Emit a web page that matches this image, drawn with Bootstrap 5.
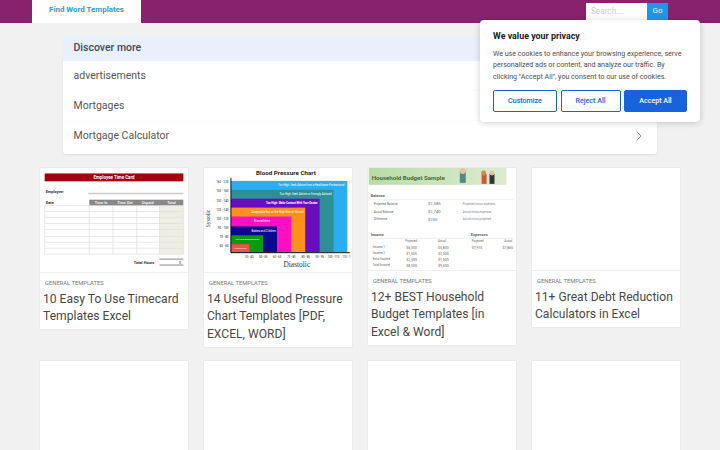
<!DOCTYPE html>
<html lang="en">
<head>
    <meta charset="UTF-8">
    <meta name="viewport" content="width=device-width, initial-scale=1.0">
    <title>Find Word Templates</title>
    <link href="https://cdn.jsdelivr.net/npm/bootstrap@5.3.0/dist/css/bootstrap.min.css" rel="stylesheet">
    <style>
        html, body { height: 450px; overflow: hidden; }
        body { background: #f1f1f1; font-family: Roboto, "Liberation Sans", sans-serif; color: #444; }
        .topbar { height: 23px; background: #88226f; padding-left: 32px; padding-right: 52px; }
        .brand-tab { width: 109px; height: 23px; background: #fff; color: #2f9bd9; font-size: 7.9px; font-weight: 700; text-decoration: none; padding-top: 4px; }
        .search-wrap { padding-top: 3px; }
        .search-box { width: 61px; height: 17px; background: #fff; color: #ccc; font-size: 8.2px; padding-left: 5px; line-height: 17px; }
        .go-btn { width: 21px; height: 17px; background: #2196e8; color: #e8f4ff; font-size: 8px; line-height: 16px; text-align: center; }
        .discover { width: 594px; margin: 13px 0 14px 63px; background: #fff; border-radius: 3px; box-shadow: 0 1px 2px rgba(0,0,0,.08); overflow: hidden; }
        .discover-head { height: 25px; background: #e8f0fb; color: #444a57; font-size: 10.5px; font-weight: 500; padding-left: 10.5px; line-height: 23px; }
        .discover-row { height: 30px; padding: 0 15px 0 10.5px; color: #555; font-size: 10.5px; border-bottom: 1px solid #fafafa; }
        .discover-row:last-child { border-bottom: 0; height: 33px; padding-bottom: 3px; }
        .tile-wrap { padding: 0 40px; }
        .tiles { --bs-gutter-y: 14px; }
        .tile { background: #fff; box-shadow: 0 0 1px rgba(0,0,0,.18); }
        .thumb { display: block; width: 148px; height: 105px; border-bottom: 1px solid #eee; }
        .thumb-short { height: 103px; }
        .tile-cat { font-size: 5.8px; color: #777; padding: 7px 0 0 5px; line-height: 7px; }
        .tile-title { font-size: 12.1px; line-height: 17.7px; color: #484848; padding: 3.5px 3px 3.5px; margin: 0; font-weight: 400; }
        .tile-empty { height: 120px; }
        .consent { position: absolute; left: 480px; top: 20px; width: 220px; height: 102px; background: #fff; border-radius: 4px; box-shadow: 0 1px 6px rgba(0,0,0,.2); padding: 10px 13px; }
        .consent-title { font-size: 8.9px; font-weight: 700; color: #212121; margin-bottom: 6px; line-height: 12px; }
        .consent-text { font-size: 7.1px; line-height: 11.3px; color: #4d4d4d; margin-bottom: 8px; }
        .consent-btn { height: 22px; font-size: 7.1px; font-weight: 500; padding: 0; border-radius: 2px; border: 1px solid #1863dc; color: #1863dc; background: #fff; }
        .consent-btn.solid { background: #1863dc; color: #fff; }
        .btn-customize { width: 64px; }
        .btn-reject { width: 60px; }
        .btn-accept { width: 63px; }
    </style>
</head>
<body>
    <nav class="topbar d-flex justify-content-between">
        <a class="brand-tab text-center" href="#">Find Word Templates</a>
        <div class="d-flex search-wrap">
            <div class="search-box">Search...</div>
            <div class="go-btn">Go</div>
        </div>
    </nav>

    <div class="discover">
        <div class="discover-head">Discover more</div>
        <div class="discover-row d-flex align-items-center">advertisements</div>
        <div class="discover-row d-flex align-items-center">Mortgages</div>
        <div class="discover-row d-flex align-items-center justify-content-between">
            Mortgage Calculator
            <svg width="6" height="10" viewBox="0 0 6 10"><path d="M1 .8 5 5 1 9.2" fill="none" stroke="#888" stroke-width="1"/></svg>
        </div>
    </div>

    <div class="tile-wrap">
    <div class="row gx-3 tiles align-items-start">
        <div class="col-3"><div class="tile">
            <svg class="thumb" viewBox="0 0 148 105">
                <rect width="148" height="105" fill="#fff"/>
                <rect x="4" y="5.500" width="140" height="8" fill="#a40010"/>
                <text x="74" y="11.500" font-size="4.500" font-weight="700" fill="#fff" text-anchor="middle" font-family="Roboto">Employee Time Card</text>
                <text x="5" y="25" font-size="4" font-weight="700" fill="#333" font-family="Roboto">Employee:</text>
                <rect x="48" y="25" width="96" height="1.500" fill="#ccc"/>
                <text x="5" y="36" font-size="4" font-weight="700" fill="#333" font-family="Roboto">Date</text>
                <rect x="49" y="32" width="95" height="6" fill="#888"/>
                <g font-size="3.800" fill="#eee" text-anchor="middle" font-family="Roboto" font-weight="700">
                    <text x="61" y="36.500">Time In</text><text x="85" y="36.500">Time Out</text><text x="108" y="36.500">Unpaid</text><text x="132" y="36.500">Total</text>
                </g>
                <rect x="120" y="38" width="24" height="49" fill="#eeeee2"/>
                <g stroke="#ddd" stroke-width=".7">
                    <path d="M4 38h140M4 44h140M4 50h140M4 56h140M4 62h140M4 69h140M4 75h140M4 81h140M4 87h140"/>
                    <path d="M49 38v49M73 38v49M97 38v49M120 38v49M144 38v49M4 38v49"/>
                </g>
                <text x="94" y="96.500" font-size="4" font-weight="700" fill="#333" font-family="Roboto">Total Hours</text>
                <path d="M120 92h24M120 98h24" stroke="#555" stroke-width=".7"/>
                <text x="142" y="97" font-size="4" fill="#333" text-anchor="end" font-family="Roboto">0</text>
            </svg>
            <div class="tile-cat">GENERAL TEMPLATES</div>
            <h5 class="tile-title">10 Easy To Use Timecard Templates Excel</h5>
        </div></div>
        <div class="col-3"><div class="tile">
            <svg class="thumb" viewBox="0 0 148 105">
                <rect width="148" height="105" fill="#fff"/>
                <text x="82" y="7.500" font-size="6.300" font-weight="700" fill="#222" text-anchor="middle" font-family="Roboto">Blood Pressure Chart</text>
                <rect x="26.500" y="13" width="117.500" height="72" fill="#29aef2"/>
                <rect x="26.500" y="22" width="103.500" height="63" fill="#2e8f97"/>
                <rect x="26.500" y="31" width="89.500" height="54" fill="#6a0dc0"/>
                <rect x="26.500" y="40" width="75" height="45" fill="#ff9020"/>
                <rect x="26.500" y="49" width="61" height="36" fill="#ff10c0"/>
                <rect x="26.500" y="59" width="46.500" height="26" fill="#0a0a90"/>
                <rect x="26.500" y="68" width="32.500" height="17" fill="#0a9a10"/>
                <rect x="26.500" y="77" width="18.500" height="8" fill="#f0504a"/>
                <g font-size="2.800" fill="#fff" text-anchor="end" font-family="Roboto">
                    <text x="141" y="18">Too High: Seek Advice from a Healthcare Professional</text>
                    <text x="128" y="27">Too High: Seek Advice or Strongly Advised</text>
                    <text x="114" y="36" font-weight="700">Too High: Make Contact With Your Doctor</text>
                    <text x="100" y="45">Acceptable But on the High Side of Normal</text>
                    <text x="72" y="64.500">Babies and Children</text>
                </g>
                <text x="58" y="54.500" font-size="4" fill="#fff" text-anchor="middle" font-family="Roboto">Excellent</text>
                <text x="43" y="73" font-size="2.300" fill="#fff" text-anchor="middle" font-family="Roboto">Not Low Blood Must Be</text>
                <text x="36" y="81.500" font-size="2.300" fill="#fff" text-anchor="middle" font-family="Roboto">Hypotension</text>
                <path d="M26.500 10v75.500h120" fill="none" stroke="#111" stroke-width="1"/>
                <g font-size="3" fill="#222" text-anchor="end" font-family="Roboto">
                    <text x="24" y="15.500">160 - 220</text><text x="24" y="24.500">150 - 160</text><text x="24" y="34">130 - 140</text><text x="24" y="43">120 - 140</text><text x="24" y="52">100 - 120</text><text x="24" y="61.500">90 - 100</text><text x="24" y="71">70 - 80</text><text x="24" y="80">60 - 65</text>
                </g>
                <g font-size="2.800" fill="#222" text-anchor="middle" font-family="Roboto">
                    <text x="45" y="91">30 - 40</text><text x="59" y="91">50 - 55</text><text x="73" y="91">60 - 65</text><text x="87.500" y="91">70 - 80</text><text x="102" y="91">80 - 85</text><text x="116" y="91">90 - 95</text><text x="130" y="91">100 - 110</text><text x="143" y="91">110 - 1</text>
                </g>
                <text x="93" y="100" font-size="7.500" fill="#333" text-anchor="middle" font-family="Liberation Serif">Diastolic</text>
                <text transform="translate(5 51) rotate(-90)" font-size="5.500" fill="#333" text-anchor="middle" font-family="Liberation Serif">Systolic</text>
            </svg>
            <div class="tile-cat">GENERAL TEMPLATES</div>
            <h5 class="tile-title">14 Useful Blood Pressure Chart Templates [PDF, EXCEL, WORD]</h5>
        </div></div>
        <div class="col-3"><div class="tile">
            <svg class="thumb thumb-short" viewBox="0 0 148 103">
                <defs><linearGradient id="bannerFade" x1="0" x2="1"><stop offset="0" stop-color="#b9dca6"/><stop offset="1" stop-color="#dcebd0"/></linearGradient></defs>
                <rect width="148" height="103" fill="#fff"/>
                <rect width="139" height="17" fill="url(#bannerFade)"/>
                <text x="3" y="12" font-size="6.200" font-weight="700" fill="#4a6a3a" font-family="Roboto">Household Budget Sample</text>
                <rect x="92" y="3" width="6" height="12" fill="#4d8a8a"/><circle cx="95" cy="3" r="3" fill="#e6c3a0"/>
                <rect x="114" y="6" width="5" height="10" fill="#c85a30"/><circle cx="116" cy="5" r="2.500" fill="#d28a50"/>
                <rect x="122" y="6" width="5" height="10" fill="#333"/><circle cx="124.500" cy="5" r="2.500" fill="#e6c3a0"/>
                <g fill="#666" font-family="Roboto">
                    <text x="2" y="29" font-size="4" font-weight="700">Balance</text>
                    <text x="5" y="37" font-size="3">Projected Balance</text><text x="5" y="45" font-size="3">Actual Balance</text><text x="5" y="53" font-size="3">Difference</text>
                    <text x="60" y="37.500" font-size="4.200">$1,585</text><text x="60" y="45.500" font-size="4.200">$1,740</text><text x="60" y="53.500" font-size="4.200">$155</text>
                    <text x="95" y="37" font-size="2.800" fill="#888">Projected minus expenses</text><text x="95" y="45" font-size="2.800" fill="#888">Actual minus expenses</text><text x="95" y="53" font-size="2.800" fill="#888">Actual minus projected</text>
                    <text x="2" y="69" font-size="4" font-weight="700">Income</text><text x="103" y="69" font-size="4" font-weight="700">Expenses</text>
                    <text x="37" y="75" font-size="2.800">Projected</text><text x="70" y="75" font-size="2.800">Actual</text><text x="104" y="75" font-size="2.800">Projected</text><text x="137" y="75" font-size="2.800">Actual</text>
                    <text x="4" y="81" font-size="3">Income 1</text><text x="4" y="87" font-size="3">Income 2</text><text x="4" y="93" font-size="3">Extra Income</text><text x="4" y="99" font-size="3">Total Income</text>
                    <text x="38" y="81.500" font-size="3.600">$6,000</text><text x="38" y="87.500" font-size="3.600">$1,000</text><text x="38" y="93.500" font-size="3.600">$2,500</text><text x="38" y="99.500" font-size="3.600">$8,500</text>
                    <text x="70" y="81.500" font-size="3.600">$5,800</text><text x="70" y="87.500" font-size="3.600">$2,300</text><text x="70" y="93.500" font-size="3.600">$1,500</text><text x="70" y="99.500" font-size="3.600">$9,600</text>
                    <text x="104" y="81.500" font-size="3.600">$7,915</text><text x="135" y="81.500" font-size="3.600">$7,860</text>
                </g>
                <path d="M2 32h144M2 71h94M102 71h44" stroke="#ddd" stroke-width=".5"/>
            </svg>
            <div class="tile-cat">GENERAL TEMPLATES</div>
            <h5 class="tile-title">12+ BEST Household Budget Templates [in Excel &amp; Word]</h5>
        </div></div>
        <div class="col-3"><div class="tile">
            <div class="thumb thumb-short"></div>
            <div class="tile-cat">GENERAL TEMPLATES</div>
            <h5 class="tile-title">11+ Great Debt Reduction Calculators in Excel</h5>
        </div></div>
        <div class="col-3"><div class="tile tile-empty"></div></div>
        <div class="col-3"><div class="tile tile-empty"></div></div>
        <div class="col-3"><div class="tile tile-empty"></div></div>
        <div class="col-3"><div class="tile tile-empty"></div></div>
    </div>
    </div>

    <div class="consent">
        <div class="consent-title">We value your privacy</div>
        <p class="consent-text">We use cookies to enhance your browsing experience, serve personalized ads or content, and analyze our traffic. By clicking "Accept All", you consent to our use of cookies.</p>
        <div class="d-flex justify-content-between">
            <button class="consent-btn btn-customize">Customize</button>
            <button class="consent-btn btn-reject">Reject All</button>
            <button class="consent-btn btn-accept solid">Accept All</button>
        </div>
    </div>

    <script src="https://cdn.jsdelivr.net/npm/bootstrap@5.3.0/dist/js/bootstrap.bundle.min.js"></script>
</body>
</html>
